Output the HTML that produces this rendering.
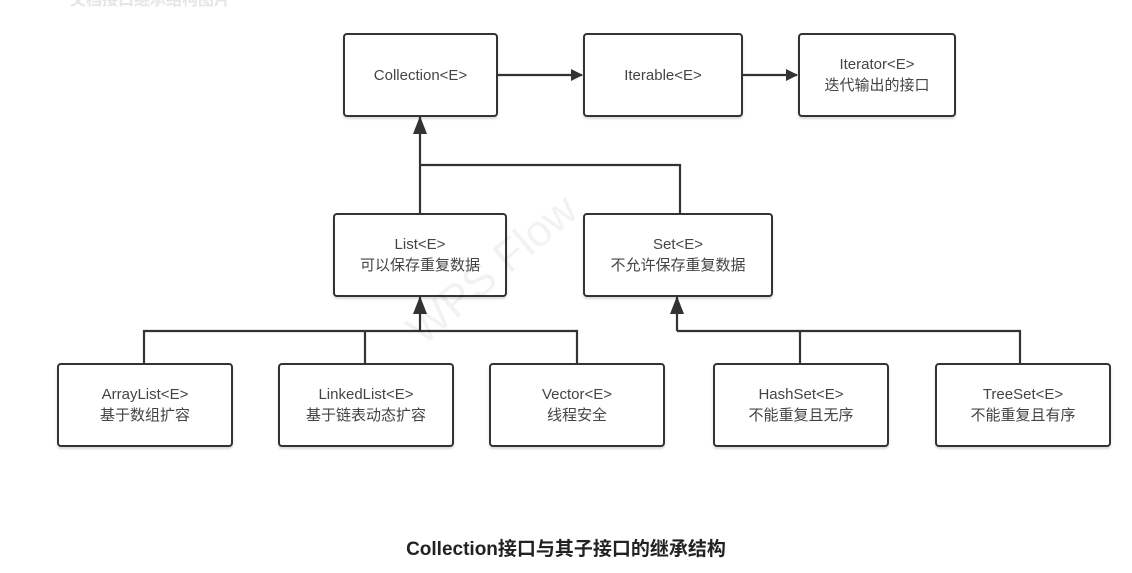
<!DOCTYPE html>
<html><head><meta charset="utf-8"><style>
html,body{margin:0;padding:0;background:#fff;}
body{width:1132px;height:573px;position:relative;overflow:hidden;font-family:"Liberation Sans","Noto Sans CJK SC",sans-serif;}
.b{position:absolute;border:2px solid #333;border-radius:4px;box-sizing:border-box;background:#fff;display:flex;flex-direction:column;align-items:center;justify-content:center;font-size:15px;color:#444;line-height:21px;text-align:center;box-shadow:0 2px 2px rgba(0,0,0,.15);}
.cap{position:absolute;left:0;width:1132px;top:534px;text-align:center;font-size:19px;font-weight:bold;color:#222;}
</style></head><body>
<svg width="1132" height="573" style="position:absolute;left:0;top:0" stroke="#333" stroke-width="2.2" fill="none">
<defs><marker id="a" markerWidth="12" markerHeight="12" refX="11" refY="6" orient="auto" markerUnits="userSpaceOnUse"><path d="M0,0 L12,6 L0,12 z" fill="#333" stroke="none"/></marker>
<marker id="u" markerWidth="18" markerHeight="14" refX="17" refY="7" orient="auto" markerUnits="userSpaceOnUse"><path d="M0,0 L18,7 L0,14 z" fill="#333" stroke="none"/></marker></defs>
<line x1="497" y1="75" x2="582" y2="75" marker-end="url(#a)"/>
<line x1="742" y1="75" x2="797" y2="75" marker-end="url(#a)"/>
<line x1="420" y1="213" x2="420" y2="117" marker-end="url(#u)"/>
<polyline points="420,165 680,165 680,213"/>
<polyline points="144,363 144,331 577,331 577,363"/>
<line x1="365" y1="331" x2="365" y2="363"/>
<line x1="420" y1="331" x2="420" y2="297" marker-end="url(#u)"/>
<polyline points="677,331 1020,331 1020,363"/>
<line x1="800" y1="331" x2="800" y2="363"/>
<line x1="677" y1="331" x2="677" y2="297" marker-end="url(#u)"/>
</svg>
<div style="position:absolute;left:70px;top:-14px;font-size:16px;color:#e6e6e6;font-weight:bold">文档接口继承结构图片</div>
<div class="b" style="left:343px;top:33px;width:155px;height:84px">Collection&lt;E&gt;</div>
<div class="b" style="left:583px;top:33px;width:160px;height:84px">Iterable&lt;E&gt;</div>
<div class="b" style="left:798px;top:33px;width:158px;height:84px">Iterator&lt;E&gt;<br>迭代输出的接口</div>
<div class="b" style="left:333px;top:213px;width:174px;height:84px">List&lt;E&gt;<br>可以保存重复数据</div>
<div class="b" style="left:583px;top:213px;width:190px;height:84px">Set&lt;E&gt;<br>不允许保存重复数据</div>
<div class="b" style="left:57px;top:363px;width:176px;height:84px">ArrayList&lt;E&gt;<br>基于数组扩容</div>
<div class="b" style="left:278px;top:363px;width:176px;height:84px">LinkedList&lt;E&gt;<br>基于链表动态扩容</div>
<div class="b" style="left:489px;top:363px;width:176px;height:84px">Vector&lt;E&gt;<br>线程安全</div>
<div class="b" style="left:713px;top:363px;width:176px;height:84px">HashSet&lt;E&gt;<br>不能重复且无序</div>
<div class="b" style="left:935px;top:363px;width:176px;height:84px">TreeSet&lt;E&gt;<br>不能重复且有序</div>
<div style="position:absolute;left:390px;top:245px;font-size:44px;color:rgba(0,0,0,.05);transform:rotate(-40deg);">WPS Flow</div>
<div class="cap">Collection接口与其子接口的继承结构</div>
</body></html>
